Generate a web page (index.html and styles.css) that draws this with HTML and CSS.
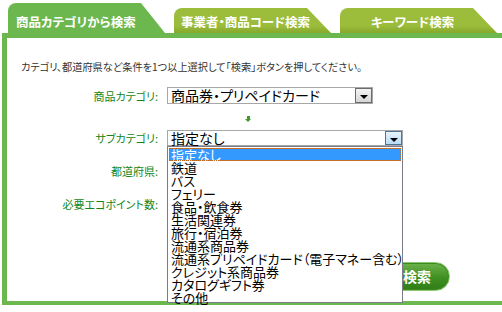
FILE: index.html
```html
<!DOCTYPE html>
<html lang="ja">
<head>
  <meta charset="UTF-8">
  <title>エコポイント商品検索</title>
  <link rel="stylesheet" href="styles.css">
</head>
<body>
  <div class="tabs">
    <div class="tab active">商品カテゴリから検索</div>
    <div class="tab">事業者・商品コード検索</div>
    <div class="tab">キーワード検索</div>
  </div>

  <div class="panel">
    <p class="intro">カテゴリ、都道府県など条件を1つ以上選択して「検索」ボタンを押してください。</p>

    <div class="form">
      <div class="row">
        <span class="label">商品カテゴリ:</span>
        <div class="select wide">
          <span class="value">商品券・プリペイドカード</span>
          <span class="drop"><i></i></span>
        </div>
      </div>

      <div class="arrow-row"><span class="arrow"></span></div>

      <div class="row">
        <span class="label">サブカテゴリ:</span>
        <div class="select sub focus">
          <span class="value">指定なし</span>
          <span class="drop"><i></i></span>
        </div>
      </div>

      <!-- these two are covered by the open list -->
      <div class="row">
        <span class="label">都道府県:</span>
        <div class="select wide">
          <span class="value"></span>
          <span class="drop"><i></i></span>
        </div>
      </div>

      <div class="row">
        <span class="label">必要エコポイント数:</span>
        <div class="select wide">
          <span class="value"></span>
          <span class="drop"><i></i></span>
        </div>
      </div>

      <div class="submit-row">
        <button class="search">検索</button>
      </div>
    </div>

    <ul class="listbox">
      <li class="current">指定なし</li>
      <li>鉄道</li>
      <li>バス</li>
      <li>フェリー</li>
      <li>食品・飲食券</li>
      <li>生活関連券</li>
      <li>旅行・宿泊券</li>
      <li>流通系商品券</li>
      <li>流通系プリペイドカード（電子マネー含む）</li>
      <li>クレジット系商品券</li>
      <li>カタログギフト券</li>
      <li>その他</li>
    </ul>
  </div>
</body>
</html>
```

FILE: styles.css
```css
body {
  margin: 0;
  font-family: "Noto Sans CJK JP", "DejaVu Sans", sans-serif;
  font-feature-settings: "palt";
  background: #fff;
  color: #333;
}
.tabs {
  display: flex;
  align-items: flex-end;
  gap: 9px;
  height: 33px;
  padding-left: 8px;
}
.tab {
  width: 157px;
  height: 25px;
  box-sizing: border-box;
  padding-left: 7px;
  padding-top: 5px;
  border-top-left-radius: 8px;
  clip-path: polygon(0 0, 133px 0, 157px 100%, 0 100%);
  background: linear-gradient(#9cbd3c 0, #9cbd3c 70%, #86a82c 100%);
  color: #fff;
  font-size: 12.5px;
  font-weight: bold;
  line-height: 18px;
}
.tab:last-child {
  text-align: center;
  padding-left: 0;
  padding-right: 12px;
}
.tab.active {
  height: 30px;
  padding-top: 10px;
  padding-left: 8px;
  background: #6cb84f;
  font-size: 12.5px;
}
.panel {
  position: relative;
  margin-left: 2px;
  height: 263px;
  border-top: 5px solid #6cb84f;
  border-left: 5px solid #6cb84f;
  border-bottom: 4px solid #6cb84f;
}
.intro {
  margin: 0;
  padding: 22px 0 0 14px;
  font-size: 10.2px;
  line-height: 13px;
  color: #333;
}
.form {
  display: flex;
  flex-direction: column;
  margin-top: 14px;
}
.row {
  display: flex;
  align-items: center;
  gap: 9px;
  height: 17px;
  margin-bottom: 16px;
}
.row:nth-child(3) {
  height: 16px;
}
.label {
  width: 151px;
  text-align: right;
  font-size: 11px;
  color: #13861a;
}
.select {
  display: flex;
  align-items: stretch;
  height: 17px;
  box-sizing: border-box;
  border: 1px solid #a7a7a7;
  background: #fff;
}
.select.wide {
  width: 206px;
}
.select.sub {
  width: 236px;
  height: 16px;
}
.value {
  flex: 1;
  padding-left: 3px;
  font-size: 14px;
  line-height: 14px;
  color: #000;
}
.drop {
  width: 17px;
  box-sizing: border-box;
  border: 1px solid #6b6b6b;
  background: linear-gradient(#f4f4f4, #d6d6d6);
  display: flex;
  align-items: center;
  justify-content: center;
}
.focus .drop {
  border-color: #4e7596;
  background: linear-gradient(#e8f4fc, #b8dcf5);
}
.drop i {
  width: 0;
  height: 0;
  margin-top: 3px;
  border-left: 4px solid transparent;
  border-right: 4px solid transparent;
  border-top: 4px solid #000;
}
.arrow-row {
  height: 26px;
  margin-top: -16px;
  padding-left: 240px;
  display: flex;
  align-items: center;
}
.arrow {
  position: relative;
  width: 3px;
  height: 3px;
  background: #3f9a2c;
}
.arrow::after {
  content: "";
  position: absolute;
  left: -2px;
  top: 3px;
  border-left: 3.5px solid transparent;
  border-right: 3.5px solid transparent;
  border-top: 3px solid #3f9a2c;
}
.submit-row {
  padding-left: 377px;
  margin-top: 34px;
}
.search {
  width: 66px;
  height: 29px;
  padding: 0 0 2px 0;
  border: 1px solid #8bc76f;
  border-radius: 15px;
  background: linear-gradient(#6db24c, #3f8f22 55%, #2f7d16);
  box-shadow: inset 0 0 0 1px #3d8a22;
  color: #fff;
  font-family: inherit;
  font-size: 14px;
  font-weight: bold;
}
.listbox {
  position: absolute;
  left: 160px;
  top: 108px;
  width: 236px;
  height: 157px;
  box-sizing: border-box;
  margin: 0;
  padding: 1px 1px;
  list-style: none;
  border: 1px solid #7a7a8a;
  background: #fff;
  z-index: 10;
}
.listbox li {
  height: 13px;
  padding-left: 2px;
  font-size: 13px;
  line-height: 13px;
  color: #000;
  white-space: nowrap;
}
.listbox li.current {
  background: #3399ff;
  color: #fff;
  outline: 1px dotted #c06a20;
  outline-offset: -1px;
}
```
